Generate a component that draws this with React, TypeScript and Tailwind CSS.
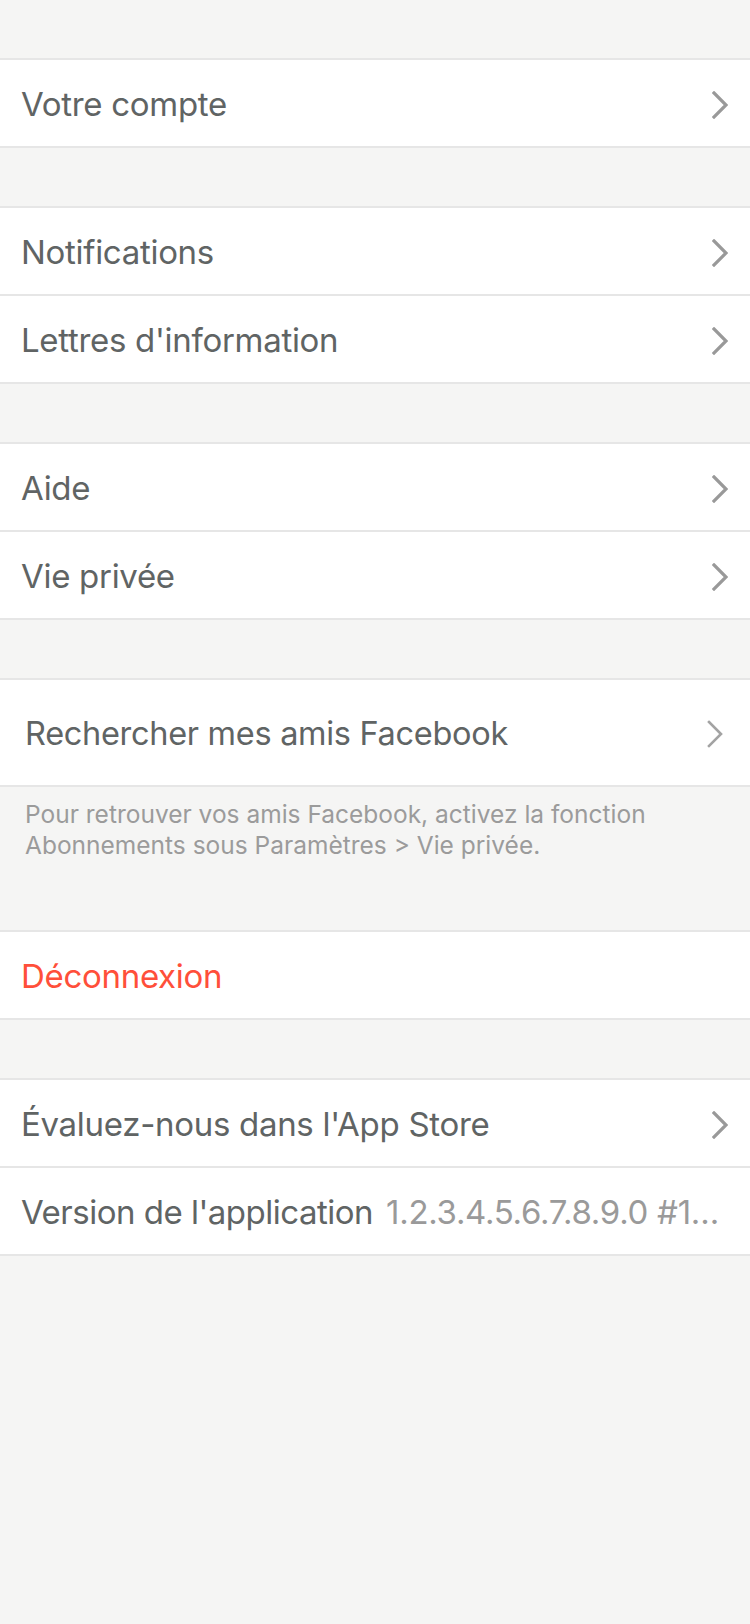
import React from 'react';

const Chevron = ({ thin }: { thin?: boolean }) => (
  <svg width="16" height="28" viewBox="0 0 16 28" fill="none" className="shrink-0">
    <polyline
      points="2,2 14,14 2,26"
      stroke={thin ? '#a3a3a3' : '#999999'}
      strokeWidth={thin ? 2.6 : 3.2}
      strokeLinecap="square"
    />
  </svg>
);

function Row({ label, last }: { label: string; last?: boolean }) {
  return (
    <div
      className={`flex items-center justify-between pl-[21px] pr-[22px] pt-[3px] bg-white ${
        last ? 'h-[86px]' : 'h-[88px] border-b-2 border-[#e6e6e6]'
      }`}
    >
      <span className="text-[33px] text-[#606464] tracking-[-0.3px]">{label}</span>
      <Chevron />
    </div>
  );
}

export default function App() {
  return (
    <div className="min-h-[1624px] bg-[#f5f5f4] font-['Inter','Liberation_Sans',sans-serif] pt-[58px]">
      <div className="bg-white border-y-2 border-[#e6e6e6]">
        <Row label="Votre compte" last />
      </div>

      <div className="mt-[58px] bg-white border-y-2 border-[#e6e6e6]">
        <Row label="Notifications" />
        <Row label="Lettres d'information" last />
      </div>

      <div className="mt-[58px] bg-white border-y-2 border-[#e6e6e6]">
        <Row label="Aide" />
        <Row label="Vie privée" last />
      </div>

      <div className="mt-[58px] bg-white border-y-2 border-[#e6e6e6]">
        <div className="h-[105px] flex items-center justify-between pl-[25px] pr-[27px] pt-[3px]">
          <span className="text-[32.5px] text-[#606464] tracking-[-0.3px]">Rechercher mes amis Facebook</span>
          <Chevron thin />
        </div>
      </div>

      <div className="h-[143px] pl-[25px] pr-[20px] pt-[12px]">
        <p className="text-[24.5px] leading-[31px] text-[#9b9b9b]">
          Pour retrouver vos amis Facebook, activez la fonction
          <br />
          Abonnements sous Paramètres &gt; Vie privée.
        </p>
      </div>

      <div className="bg-white border-y-2 border-[#e6e6e6]">
        <div className="h-[86px] flex items-center pl-[21px] pt-[3px]">
          <span className="text-[33px] text-[#ff4f3a] tracking-[-0.3px]">Déconnexion</span>
        </div>
      </div>

      <div className="mt-[58px] bg-white border-y-2 border-[#e6e6e6]">
        <Row label="Évaluez-nous dans l'App Store" />
        <div className="h-[86px] flex items-center pl-[21px] pr-[28px] pt-[3px] gap-[13px]">
          <span className="text-[33px] text-[#606464] tracking-[-0.5px] whitespace-nowrap shrink-0">
            Version de l'application
          </span>
          <span className="text-[33px] text-[#9a9a9a] tracking-[-0.3px] truncate min-w-0">
            1.2.3.4.5.6.7.8.9.0 #1234567
          </span>
        </div>
      </div>
    </div>
  );
}
